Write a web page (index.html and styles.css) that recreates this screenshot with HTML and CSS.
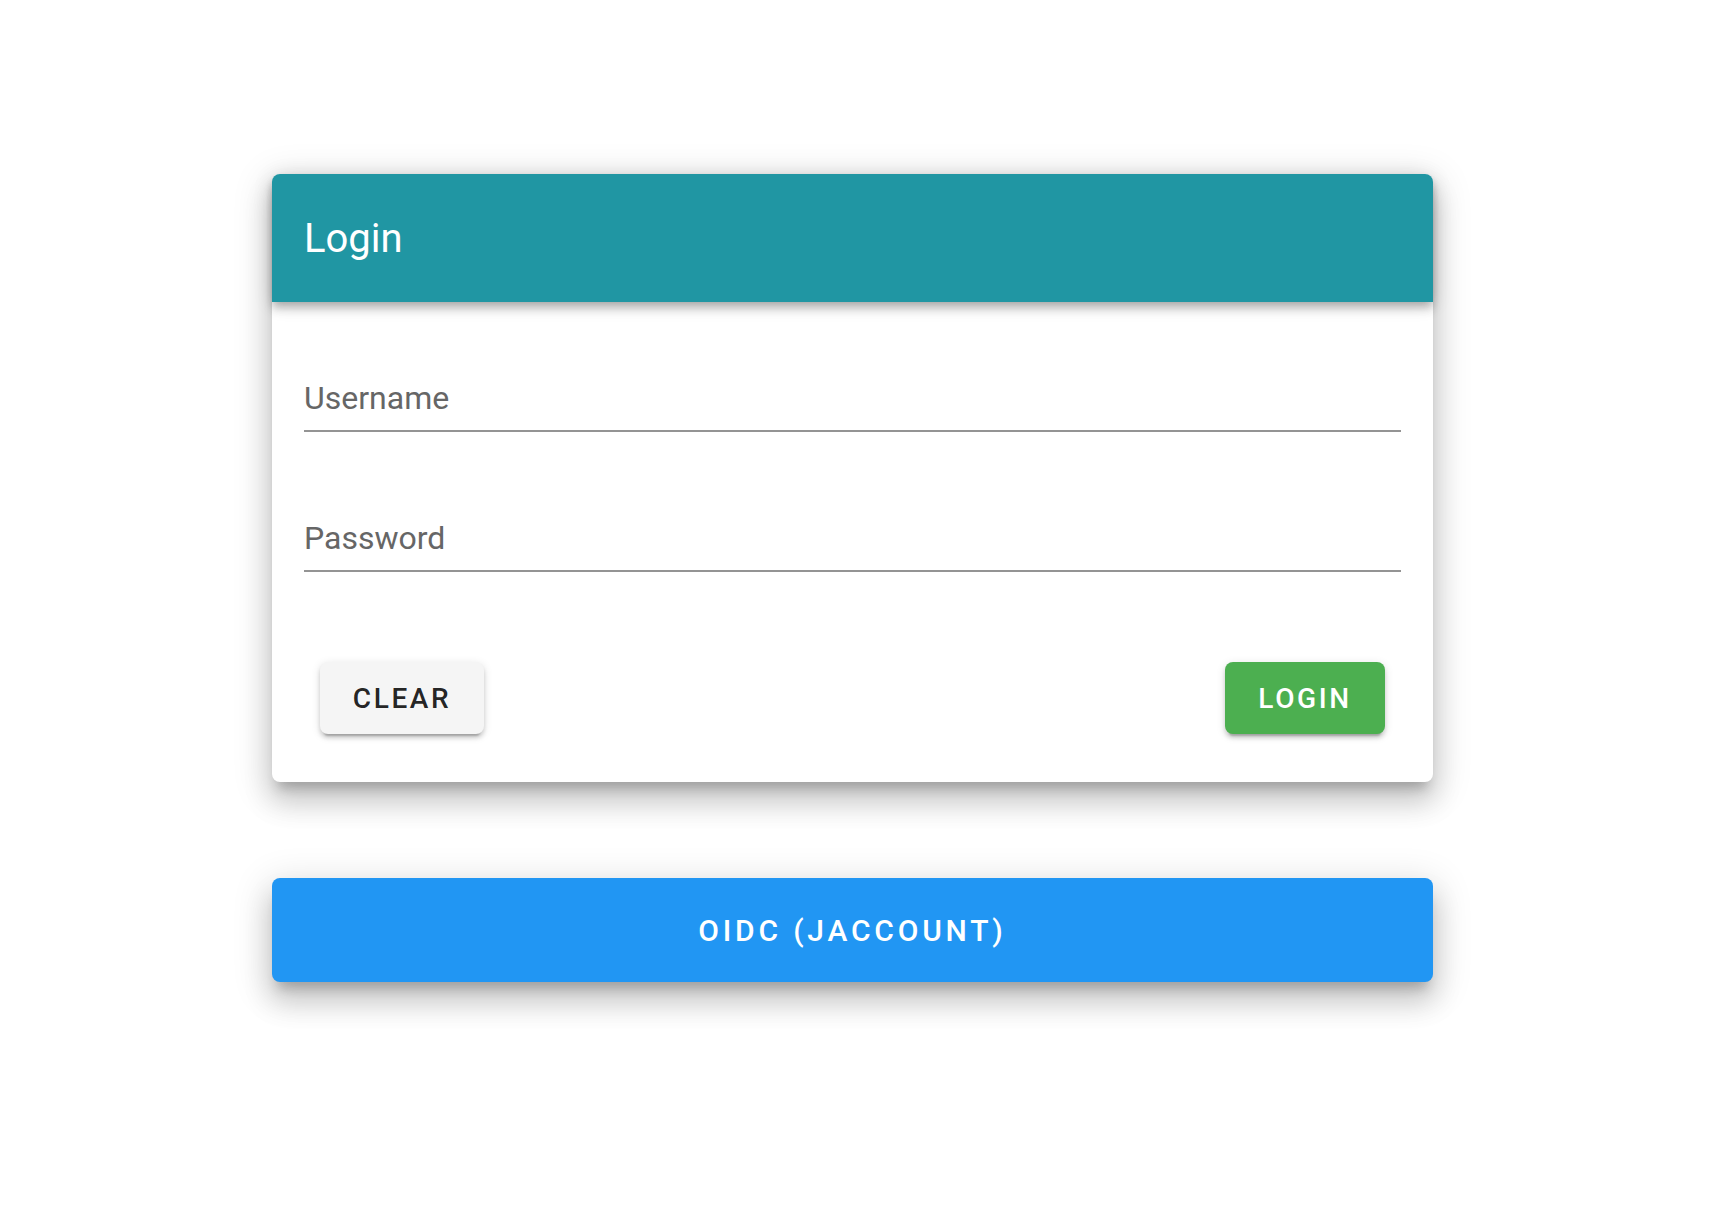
FILE: index.html
```html
<!DOCTYPE html>
<html lang="en">
<head>
<meta charset="utf-8">
<title>Login</title>
<link rel="stylesheet" href="styles.css">
</head>
<body>
<main class="page">
  <section class="card">
    <header class="card-header">
      <h1 class="card-title">Login</h1>
    </header>
    <div class="card-body">
      <label class="field">
        <span class="field-label">Username</span>
      </label>
      <label class="field field-second">
        <span class="field-label">Password</span>
      </label>
    </div>
    <div class="card-actions">
      <button class="btn btn-clear" type="button">Clear</button>
      <button class="btn btn-login" type="button">Login</button>
    </div>
  </section>
  <button class="btn-oidc" type="button">OIDC (jAccount)</button>
</main>
</body>
</html>
```

FILE: styles.css
```css
html, body {
  margin: 0;
  padding: 0;
  background: #ffffff;
}

body {
  font-family: Roboto, "Noto Sans", "Liberation Sans", sans-serif;
  min-height: 1212px;
}

.page {
  width: 1161px;
  margin-left: 272px;
  padding-top: 174px;
  padding-bottom: 120px;
  display: flex;
  flex-direction: column;
}

.card {
  background: #ffffff;
  border-radius: 8px;
  box-shadow: 0 12px 12px -6px rgba(0,0,0,0.2),
              0 20px 28px 2px rgba(0,0,0,0.14),
              0 8px 36px 6px rgba(0,0,0,0.12);
  display: flex;
  flex-direction: column;
}

.card-header {
  position: relative;
  z-index: 1;
  height: 128px;
  background: #2096a3;
  border-radius: 8px 8px 0 0;
  display: flex;
  align-items: center;
  padding: 0 32px;
  box-shadow: 0 4px 8px -2px rgba(0,0,0,0.2),
              0 8px 10px 0 rgba(0,0,0,0.14),
              0 2px 20px 0 rgba(0,0,0,0.12);
}

.card-title {
  margin: 0;
  margin-top: 2px;
  font-size: 40px;
  font-weight: 400;
  color: #ffffff;
  line-height: 48px;
}

.card-body {
  padding: 76px 32px 0;
  display: flex;
  flex-direction: column;
}

.field {
  display: block;
  padding-bottom: 12px;
  border-bottom: 2px solid #949494;
}

.field-second {
  margin-top: 86px;
}

.field-label {
  display: block;
  font-size: 32px;
  line-height: 40px;
  color: #666666;
}

.card-actions {
  display: flex;
  justify-content: space-between;
  padding: 90px 48px 48px;
}

.btn {
  height: 72px;
  padding: 0 32px;
  border: none;
  border-radius: 8px;
  font-family: Roboto, "Noto Sans", "Liberation Sans", sans-serif;
  font-size: 28px;
  font-weight: 500;
  letter-spacing: 2.6px;
  text-transform: uppercase;
  box-shadow: 0 6px 2px -4px rgba(0,0,0,0.2),
              0 4px 4px 0 rgba(0,0,0,0.14),
              0 2px 10px 0 rgba(0,0,0,0.12);
}

.btn-clear {
  width: 164px;
  background: #f5f5f5;
  color: rgba(0,0,0,0.87);
}

.btn-login {
  width: 160px;
  background: #4caf50;
  color: #ffffff;
}

.btn-oidc {
  margin-top: 96px;
  height: 104px;
  width: 100%;
  border: none;
  border-radius: 8px;
  background: #2196f3;
  color: #ffffff;
  font-family: Roboto, "Noto Sans", "Liberation Sans", sans-serif;
  font-size: 30px;
  font-weight: 500;
  letter-spacing: 3.8px;
  text-transform: uppercase;
  box-shadow: 0 12px 12px -6px rgba(0,0,0,0.2),
              0 20px 28px 2px rgba(0,0,0,0.14),
              0 8px 36px 6px rgba(0,0,0,0.12);
}
```
